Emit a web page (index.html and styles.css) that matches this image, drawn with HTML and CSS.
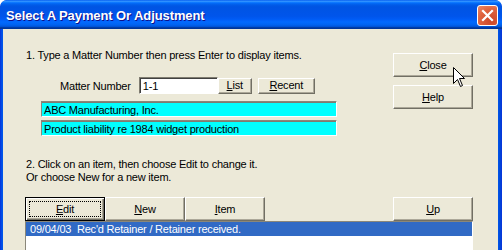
FILE: index.html
```html
<!DOCTYPE html>
<html lang="en">
<head>
    <link rel="stylesheet" href="styles.css">
</head>
<body>
    <div class="window">
        <div class="titlebar">
            <span class="title">Select A Payment Or Adjustment</span>
            <button class="close-x" aria-label="Close">
                <svg width="13" height="13" viewBox="0 0 13 13">
                    <path d="M2 2 L11 11 M11 2 L2 11" stroke="#fff" stroke-width="2.2" stroke-linecap="square"/>
                </svg>
            </button>
        </div>

        <div class="client">
            <div class="top">
                <div class="main">
                    <p class="step">1. Type a Matter Number then press Enter to display items.</p>
                    <div class="matter-row">
                        <label class="matter-label">Matter Number</label>
                        <div class="field">1-1</div>
                        <button class="btn btn-small btn-list"><u>L</u>ist</button>
                        <button class="btn btn-small btn-recent"><u>R</u>ecent</button>
                    </div>
                    <div class="info info-first">ABC Manufacturing, Inc.</div>
                    <div class="info">Product liability re 1984 widget production</div>
                </div>
                <div class="side">
                    <button class="btn btn-big"><u>C</u>lose</button>
                    <button class="btn btn-big"><u>H</u>elp</button>
                </div>
            </div>

            <p class="step step-two">2. Click on an item, then choose Edit to change it.<br>Or choose New for a new item.</p>

            <div class="toolbar">
                <button class="btn btn-big btn-default"><span class="focus"><u>E</u>dit</span></button>
                <button class="btn btn-big"><u>N</u>ew</button>
                <button class="btn btn-big"><u>I</u>tem</button>
                <button class="btn btn-big btn-up"><u>U</u>p</button>
            </div>

            <div class="list">
                <div class="row selected">09/04/03  Rec'd Retainer / Retainer received.</div>
            </div>
        </div>

        <svg class="cursor" width="13" height="21" viewBox="0 0 13 21">
            <path d="M0.5 0.5 L0.5 16.5 L4.5 12.5 L7.5 19.5 L9.5 18.5 L6.5 11.5 L11.5 11.5 Z" fill="#fff" stroke="#000" stroke-width="1"/>
        </svg>
    </div>
</body>
</html>
```

FILE: styles.css
```css
body {
    margin: 0;
    background: #fff;
    font-family: 'Liberation Sans', Arial, sans-serif;
}

.window {
    position: relative;
    width: 502px;
    height: 250px;
    overflow: hidden;
    background: linear-gradient(to right, #0831d9, #0055ea 2px, #0055ea 498px, #0048d8 500px, #0831d9);
    border-radius: 7px 7px 0 0;
}

.titlebar {
    height: 29px;
    display: flex;
    align-items: center;
    justify-content: space-between;
    padding: 0 4px 0 6px;
    box-sizing: border-box;
    border-radius: 7px 7px 0 0;
    background: linear-gradient(to bottom, #0058ee 0%, #3593ff 4%, #288eff 6%, #127dff 8%, #036ffc 10%, #0262ee 14%, #0057e5 20%, #0054e3 24%, #0055eb 56%, #005bf5 66%, #026afe 76%, #0062ef 86%, #0052d6 92%, #0040ab 94%, #003092 100%);
}

.title {
    color: #fff;
    font-weight: bold;
    font-size: 13px;
    letter-spacing: -0.1px;
    text-shadow: 1px 1px #0f1089;
    margin-top: 1px;
}

.close-x {
    width: 21px;
    height: 21px;
    padding: 0;
    margin-top: 1px;
    border: 1px solid #fff;
    border-radius: 3px;
    background: radial-gradient(circle at 70% 80%, #cc4628, #e0643f 60%, #ee8a69);
    display: flex;
    align-items: center;
    justify-content: center;
}

.client {
    background: #ece9d8;
    margin: 0 4px 0 3px;
    height: 221px;
    padding-left: 22px;
    box-sizing: border-box;
    font-size: 11px;
    letter-spacing: -0.2px;
    color: #000;
}

.top {
    display: flex;
}

.main {
    width: 368px;
    padding-top: 20px;
}

.step {
    margin: 0;
    padding-left: 1px;
    line-height: 13px;
}

.matter-row {
    display: flex;
    align-items: center;
    margin-top: 15px;
    padding-left: 35px;
}

.matter-label {
    margin-right: 8px;
}

.field {
    width: 79px;
    height: 17px;
    box-sizing: border-box;
    background: #fff;
    border: 1px solid;
    border-color: #7f7c70 #fff #fff #7f7c70;
    box-shadow: inset 1px 1px #404040;
    padding: 2px 0 0 3px;
    line-height: 12px;
}

.btn {
    font-family: 'Liberation Sans', Arial, sans-serif;
    font-size: 11px;
    letter-spacing: -0.2px;
    color: #000;
    background: #ece9d8;
    border: 1px solid;
    border-color: #fff #716f64 #716f64 #fff;
    box-shadow: inset -1px -1px #aca899;
    padding: 0;
    box-sizing: border-box;
}

.btn-small {
    height: 16px;
    line-height: 13px;
}

.btn-list {
    width: 34px;
}

.btn-recent {
    width: 57px;
    margin-left: 6px;
}

.info {
    width: 296px;
    height: 16px;
    box-sizing: border-box;
    margin-left: 16px;
    margin-top: 3px;
    background: #00ffff;
    border: 1px solid;
    border-color: #8a877a #fff #fff #8a877a;
    box-shadow: inset 0 1px #7f7c70;
    padding: 2px 0 0 2px;
    line-height: 12px;
}

.info-first {
    margin-top: 7px;
}

.side {
    display: flex;
    flex-direction: column;
    gap: 8px;
    padding-top: 24px;
}

.btn-big {
    width: 80px;
    height: 24px;
}

.step-two {
    margin-top: 22px;
}

.toolbar {
    display: flex;
    width: 448px;
    margin-top: 13px;
}

.btn-default {
    border: 1px solid #000;
    box-shadow: inset 1px 1px #fff, inset -1px -1px #716f64, inset -2px -2px #aca899;
    padding: 3px;
}

.focus {
    display: block;
    height: 100%;
    box-sizing: border-box;
    border: 1px dotted #000;
    line-height: 14px;
}

.btn-up {
    margin-left: auto;
}

.list {
    width: 448px;
    height: 40px;
    box-sizing: border-box;
    background: #fff;
    border-top: 1px solid #8a877a;
    border-left: 1px solid #8a877a;
    border-right: 1px solid #fff;
}

.row {
    height: 14px;
    line-height: 14px;
    padding-left: 4px;
    white-space: pre;
}

.selected {
    background: #316ac5;
    color: #fff;
}

.cursor {
    position: absolute;
    left: 453px;
    top: 67px;
}
```
